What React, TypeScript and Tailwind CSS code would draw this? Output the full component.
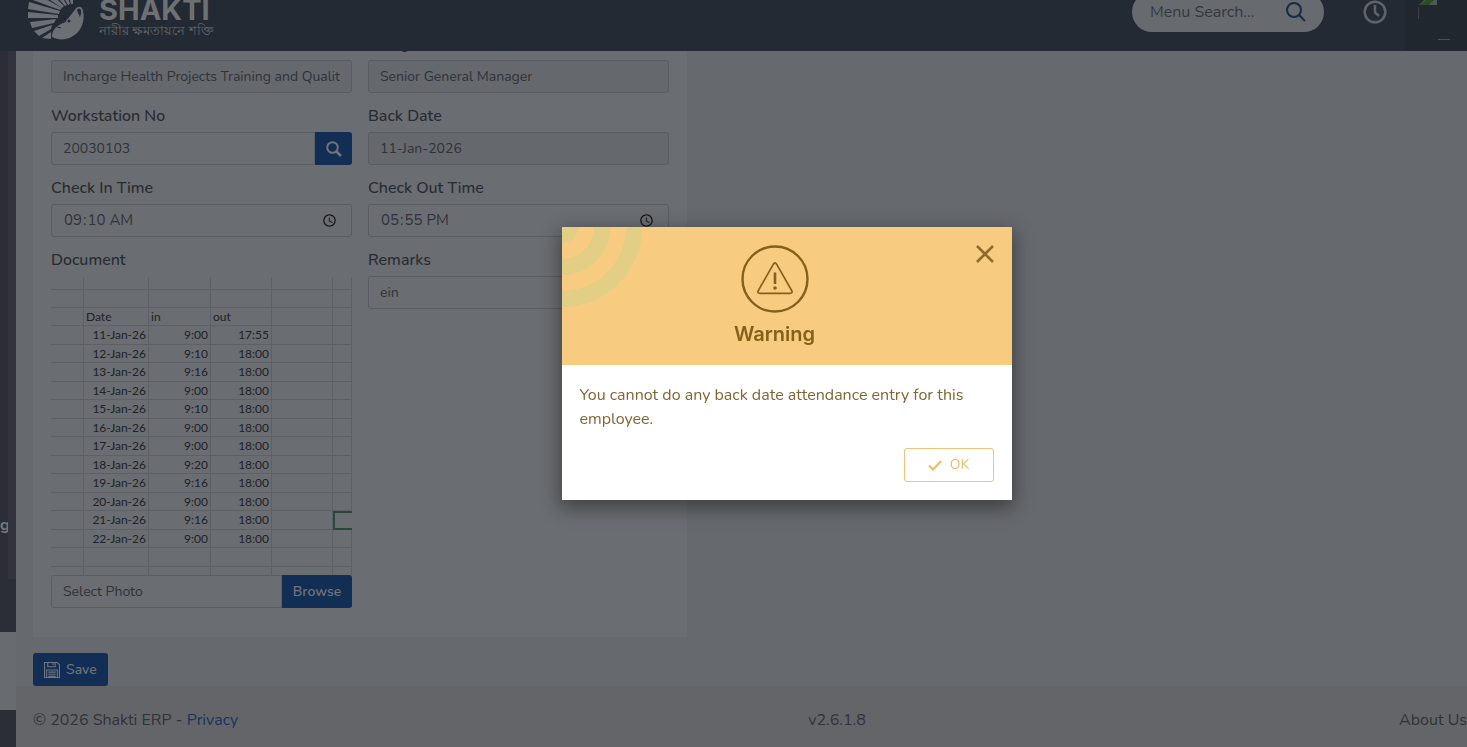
import type { ReactNode } from 'react';

const attendance = [
  ['11-Jan-26', '9:00', '17:55'],
  ['12-Jan-26', '9:10', '18:00'],
  ['13-Jan-26', '9:16', '18:00'],
  ['14-Jan-26', '9:00', '18:00'],
  ['15-Jan-26', '9:10', '18:00'],
  ['16-Jan-26', '9:00', '18:00'],
  ['17-Jan-26', '9:00', '18:00'],
  ['18-Jan-26', '9:20', '18:00'],
  ['19-Jan-26', '9:16', '18:00'],
  ['20-Jan-26', '9:00', '18:00'],
  ['21-Jan-26', '9:16', '18:00'],
  ['22-Jan-26', '9:00', '18:00'],
];

const baseInput =
  'block h-[33px] w-full min-w-0 rounded-[3px] border border-[#5a5d62] pl-[11px] text-[#303339] outline-none';
const inputClass = `${baseInput} bg-transparent pr-[11px] text-sm`;
const timeClass = `${baseInput} bg-transparent pr-[10px] text-[15px] [&::-webkit-calendar-picker-indicator]:opacity-80`;
const disabledClass = `${baseInput} bg-[#65686c] pr-[11px] text-sm`;

function Field({ id, label, children }: { id: string; label: string; children: ReactNode }) {
  return (
    <div className="mb-[11px]">
      <label htmlFor={id} className="mb-1 block text-base leading-6 font-medium text-[#282b31]">
        {label}
      </label>
      {children}
    </div>
  );
}

function LogoMark() {
  return (
    <svg className="h-[60px] w-[60px]" viewBox="0 0 60 60" fill="#6c7075" aria-hidden="true">
      {/* rays */}
      <path d="M1 32 L31 35 L31 38 L1 38 Z" />
      <path d="M2 22 L33 31 L32 34 L1 29 Z" />
      <path d="M6 12 L35 28 L33 30 L3 19 Z" />
      <path d="M14 4 L37 26 L35 28 L8 10 Z" />
      <path d="M24 0 L40 25 L38 26 L17 2 Z" />
      <path d="M35 0 L43 24 L41 25 L27 0 Z" />
      <path d="M46 3 L46 24 L44 24 L38 1 Z" />
      <path d="M3 42 L29 39 L27 43 L5 48 Z" />
      <path d="M7 51 L25 45 L24 49 L12 56 Z" />
      <path d="M15 58 L24 52 L24 59 Z" />
      {/* face */}
      <path d="M25 57 C25 51 28 47 34 44 C40 41 43 36 47 31 C50 26 55 25 56 31 C58 40 55 49 49 54 C42 60 33 61 25 57 Z" />
      <path d="M50 30 C52 27 55 29 54 34 L53 37 C52 35 51 33 50 30 Z" fill="#242a33" />
      <circle cx="42" cy="41" r="1.5" fill="#242a33" />
      <path d="M30 47 L34 48 M36 43 L39 41" stroke="#242a33" strokeWidth="1" />
    </svg>
  );
}

function Header() {
  return (
    <header className="flex h-[51px] items-end overflow-hidden bg-[#242a33]">
      <a href="#" className="ml-[27px] flex items-end gap-3 pb-[11px]">
        <LogoMark />
        <span className="mb-0.5 flex flex-col">
          <span className="font-['Inter'] text-[29px] leading-[29px] font-bold text-[#6e7174]">SHAKTI</span>
          <span className="text-[13px] leading-[14px] text-[#65686c]">নারীর ক্ষমতায়নে শক্তি</span>
        </span>
      </a>
      <form className="mb-[19px] ml-auto flex h-10 w-48 items-center rounded-full bg-[#676a6e] pr-[18px] pl-[18px]">
        <input
          type="search"
          aria-label="Menu Search"
          placeholder="Menu Search..."
          className="min-w-0 flex-1 bg-transparent text-base outline-none placeholder:text-[#34383e]"
        />
        <button type="submit" aria-label="Search">
          <svg className="h-5 w-5" viewBox="0 0 20 20" fill="none" stroke="#182a48" strokeWidth="2">
            <circle cx="8" cy="8" r="7" />
            <path d="M13 13 L19 19" />
          </svg>
        </button>
      </form>
      <button type="button" aria-label="Clock" className="mb-[27px] ml-[39px]">
        <svg className="h-6 w-6" viewBox="0 0 24 24" fill="none" stroke="#5f6267" strokeWidth="2.5">
          <circle cx="12" cy="12" r="10.3" />
          <path d="M12 5 V12.5 L16 16" />
        </svg>
      </button>
      <div className="ml-[18px] h-[51px] w-[62px] bg-[#21272f] pl-[13px]">
        <svg className="h-[45px] w-[40px]" viewBox="0 0 40 45" fill="none">
          <path d="M1 5 L6 0 H13 L7 5 Z" fill="#4d5559" />
          <path d="M2 5 L8 0 H16 L9 5 Z" fill="#27521f" />
          <path d="M10 5 L16 0 H19 V5 Z" fill="#50585b" />
          <path d="M0.5 7 V19" stroke="#3d4248" />
          <path d="M20 39.5 H32" stroke="#4a4e53" />
        </svg>
      </div>
    </header>
  );
}

function Sidebar() {
  return (
    <aside className="flex w-4 shrink-0 flex-col">
      <div className="flex flex-1 bg-[#2c2e35]">
        <div className="flex w-2 flex-col pt-[462px] text-base leading-6 font-bold text-[#75777a]">g</div>
        <div className="mb-[53px] w-2 bg-[#32333d]" />
      </div>
      <div className="h-[78px] bg-[#686b70]" />
      <div className="h-[37px] bg-[#2c2e35]" />
    </aside>
  );
}

function DocumentPreview() {
  const cell = 'border-r border-b border-[#5d6065] px-0.5 py-0 leading-none whitespace-nowrap';
  return (
    <div className="h-[298px] overflow-hidden">
      <table className="w-full table-fixed border-separate border-spacing-0 font-['Lato','Noto_Sans',sans-serif] text-xs text-[#1f2227]">
        <colgroup>
          <col className="w-[33px]" />
          <col className="w-[65px]" />
          <col className="w-[62px]" />
          <col className="w-[61px]" />
          <col className="w-[61px]" />
          <col />
        </colgroup>
        <thead>
          <tr className="h-[13px]">
            {[0, 1, 2, 3, 4, 5].map((i) => (
              <td key={i} className={cell} />
            ))}
          </tr>
          <tr className="h-[18px]">
            {[0, 1, 2, 3, 4, 5].map((i) => (
              <td key={i} className={cell} />
            ))}
          </tr>
          <tr className="h-[18px] text-left">
            <td className={cell} />
            <th className={`${cell} font-normal`}>Date</th>
            <th className={`${cell} font-normal`}>in</th>
            <th className={`${cell} font-normal`}>out</th>
            <td className={cell} />
            <td className={cell} />
          </tr>
        </thead>
        <tbody>
          {attendance.map(([date, checkIn, checkOut]) => (
            <tr key={date} className="text-right odd:h-[19px] even:h-[18px]">
              <td className={cell} />
              <td className={cell}>{date}</td>
              <td className={cell}>{checkIn}</td>
              <td className={cell}>{checkOut}</td>
              <td className={cell} />
              <td className={date === '21-Jan-26' ? 'border-2 border-r-0 border-[#2b473b]' : cell} />
            </tr>
          ))}
          {[0, 1].map((row) => (
            <tr key={row} className="h-[19px]">
              {[0, 1, 2, 3, 4, 5].map((i) => (
                <td key={i} className={cell} />
              ))}
            </tr>
          ))}
        </tbody>
      </table>
    </div>
  );
}

function AttendanceForm() {
  return (
    <section className="w-[654px] max-w-full bg-[#6a6d71] px-[18px] pb-[29px]">
      {/* Scrolled under the header */}
      <div className="-mt-[19px] grid grid-cols-2 items-end gap-x-4">
        <div className="mb-[11px]">
          <input
            aria-label="Function"
            disabled
            value="Incharge Health Projects Training and Quality"
            className={disabledClass}
          />
        </div>
        <Field id="designation" label="Designation">
          <input id="designation" disabled value="Senior General Manager" className={disabledClass} />
        </Field>
      </div>
      <div className="grid grid-cols-2 gap-x-4">
        <Field id="workstation" label="Workstation No">
          <div className="flex">
            <input id="workstation" defaultValue="20030103" className={`${inputClass} rounded-r-none`} />
            <button
              type="button"
              aria-label="Find workstation"
              className="flex w-[37px] shrink-0 items-center justify-center rounded-r-[3px] bg-[#122e55]"
            >
              <svg className="h-4 w-4" viewBox="0 0 16 16" fill="none" stroke="#6f7379" strokeWidth="2">
                <circle cx="6.5" cy="6.5" r="5.3" />
                <path d="M10.5 10.5 L15 15" strokeWidth="2.6" />
              </svg>
            </button>
          </div>
        </Field>
        <Field id="backDate" label="Back Date">
          <input id="backDate" disabled value="11-Jan-2026" className={disabledClass} />
        </Field>
        <Field id="checkIn" label="Check In Time">
          <input id="checkIn" type="time" defaultValue="09:10" className={timeClass} />
        </Field>
        <Field id="checkOut" label="Check Out Time">
          <input id="checkOut" type="time" defaultValue="17:55" className={timeClass} />
        </Field>
        <div>
          <label htmlFor="photo" className="mb-[5px] block text-base leading-6 font-medium text-[#282b31]">
            Document
          </label>
          <DocumentPreview />
          <div className="flex">
            <input id="photo" readOnly value="Select Photo" className={`${inputClass} rounded-r-none`} />
            <button
              type="button"
              className="w-[70px] shrink-0 rounded-r-[3px] bg-[#122e55] text-sm font-semibold text-[#707379]"
            >
              Browse
            </button>
          </div>
        </div>
        <Field id="remarks" label="Remarks">
          <input id="remarks" defaultValue="ein" className={inputClass} />
        </Field>
      </div>
    </section>
  );
}

function WarningDialog() {
  return (
    <div className="fixed inset-0 flex items-center justify-center pb-5 pl-[106px]">
      <div
        role="alertdialog"
        aria-labelledby="dialog-title"
        className="w-[450px] bg-white shadow-[0_6px_18px_2px_rgba(0,0,0,0.4)]"
      >
        <div className="relative flex items-start bg-[#f7cb80] p-[18px]">
          <svg className="absolute top-0 left-0 h-20 w-20" viewBox="0 0 80 80" fill="none" stroke="#e2ce84">
            <circle cx="0" cy="0" r="16" fill="#e2ce84" stroke="none" />
            <circle cx="0" cy="0" r="40" strokeWidth="16" />
            <circle cx="0" cy="0" r="72" strokeWidth="16" />
          </svg>
          <div className="flex flex-1 flex-col items-center">
            <svg className="h-[68px] w-[68px]" viewBox="0 0 68 68" fill="none" stroke="#84601c">
              <circle cx="34" cy="34" r="32.5" strokeWidth="2.4" />
              <path
                d="M32.4 19.2 Q34 16.6 35.6 19.2 L50.6 45.4 Q52 48.3 49 48.3 H19 Q16 48.3 17.4 45.4 Z"
                strokeWidth="1.7"
                strokeLinejoin="round"
              />
              <path d="M34 27.5 V39" strokeWidth="2.6" />
              <circle cx="34" cy="43" r="1.8" fill="#84601c" stroke="none" />
            </svg>
            <h2
              id="dialog-title"
              className="mt-2 font-['Inter'] text-xl leading-[26px] font-semibold text-[#84601c]"
            >
              Warning
            </h2>
          </div>
          <button type="button" aria-label="Close" className="flex w-6 justify-end">
            <svg className="h-[18px] w-[18px]" viewBox="0 0 18 18" stroke="#8f6b2b" strokeWidth="2.5">
              <path d="M1 1 L17 17 M17 1 L1 17" />
            </svg>
          </button>
        </div>
        <div className="p-[18px]">
          <p className="text-base leading-6 text-[#846431]">
            You cannot do any back date attendance entry for this employee.
          </p>
          <div className="mt-[17px] flex justify-end">
            <button
              type="button"
              className="flex h-[34px] w-[90px] items-center justify-center gap-2 rounded-[3px] border border-[#f3c178] text-sm text-[#f0bb6c]"
            >
              <svg className="h-3.5 w-3.5" viewBox="0 0 14 14" fill="none" stroke="currentColor" strokeWidth="2.2">
                <path d="M1 7.5 L5 11.5 L13.2 3" />
              </svg>
              OK
            </button>
          </div>
        </div>
      </div>
    </div>
  );
}

export default function App() {
  return (
    <div className="flex min-h-screen flex-col overflow-hidden bg-[#66696e] font-['Nunito','Lato','Noto_Sans',sans-serif]">
      <Header />
      <div className="flex flex-1">
        <Sidebar />
        <div className="flex min-w-0 flex-1 flex-col">
          <main className="flex-1 overflow-hidden pl-[17px]">
            <AttendanceForm />
            <button
              type="button"
              className="mt-4 flex h-[33px] items-center gap-[6px] rounded-[3px] bg-[#122e55] px-[11px] text-sm font-medium text-[#707379]"
            >
              <svg className="h-4 w-4" viewBox="0 0 15 15" fill="none" stroke="#70757e">
                <path d="M0.5 0.5 H12.5 L14.5 2.5 V14.5 H0.5 Z" />
                <path d="M3.5 0.5 V4.5 H10.5 V0.5 M8.5 1 V3" />
                <path d="M2.5 14.5 V7.5 H12.5 V14.5 M4 9.5 H11 M4 11.5 H11 M4 13.5 H11" />
              </svg>
              Save
            </button>
          </main>
          <footer className="grid h-[61px] grid-cols-[1fr_auto_1fr] items-center bg-[#636569] pt-1.5 pl-[17px] text-base whitespace-nowrap text-[#303339]">
            <span>
              © 2026 Shakti ERP -{' '}
              <a href="#" className="text-[#1a345b]">
                Privacy
              </a>
            </span>
            <span className="pl-[174px]">v2.6.1.8</span>
            <a href="#" className="text-right">
              About Us
            </a>
          </footer>
        </div>
      </div>
      <WarningDialog />
    </div>
  );
}
